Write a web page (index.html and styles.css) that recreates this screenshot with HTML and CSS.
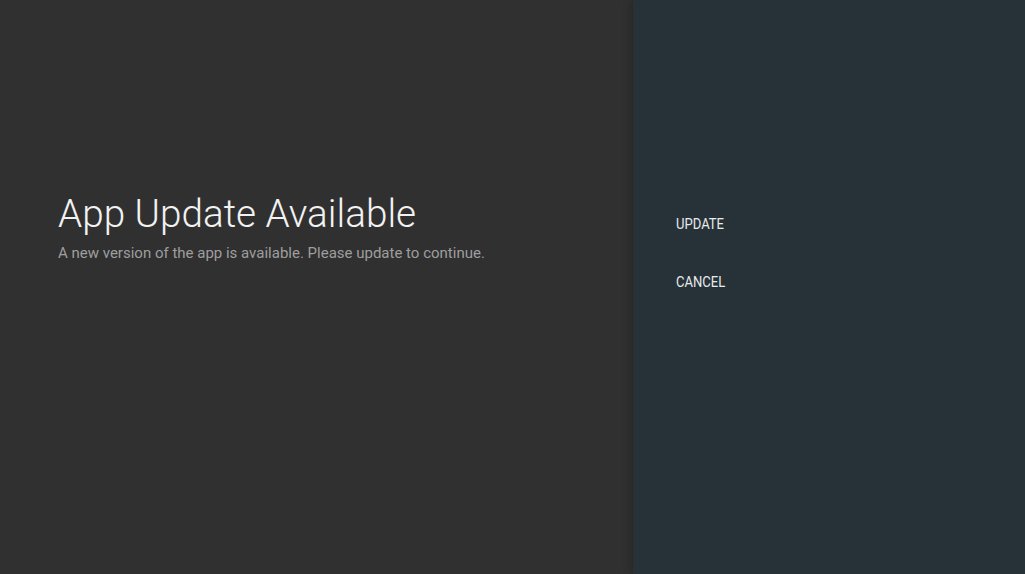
FILE: index.html
```html
<!DOCTYPE html>
<html lang="en">
<head>
    <meta charset="UTF-8">
    <title>App Update</title>
    <link rel="stylesheet" href="styles.css">
</head>
<body>
    <div class="guidance">
        <h1 class="title">App Update Available</h1>
        <p class="description">A new version of the app is available. Please update to continue.</p>
    </div>
    <div class="actions">
        <button class="action">UPDATE</button>
        <button class="action">CANCEL</button>
    </div>
</body>
</html>
```

FILE: styles.css
```css
html, body {
    height: 100%;
}
body {
    margin: 0;
    display: flex;
    background: #303030;
    font-family: Roboto, "Liberation Sans", sans-serif;
    overflow: hidden;
}
.guidance {
    flex: 1;
    padding: 188px 0 0 58px;
}
.title {
    margin: 0;
    font-size: 38.7px;
    font-weight: 300;
    color: #f2f2f2;
    line-height: 52px;
}
.description {
    margin: 3px 0 0;
    font-size: 15px;
    color: #9e9e9e;
    line-height: 20px;
}
.actions {
    width: 392px;
    background: #263238;
    box-shadow: -2px 0 8px rgba(0, 0, 0, 0.22);
    display: flex;
    flex-direction: column;
    align-items: flex-start;
    padding: 212px 0 0 43px;
    box-sizing: border-box;
    gap: 34px;
}
.action {
    background: none;
    border: none;
    padding: 0;
    color: #e8eaeb;
    font-family: Roboto, sans-serif;
    font-size: 15px;
    line-height: 24px;
    transform: scaleX(0.87);
    transform-origin: left center;
    cursor: pointer;
}
```
